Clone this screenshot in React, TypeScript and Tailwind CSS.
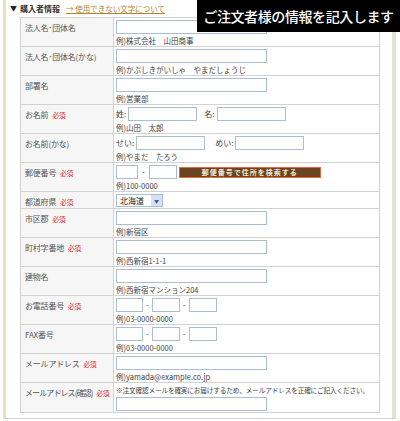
import React from 'react';

const font = { fontFamily: '"Noto Sans CJK JP", "Noto Sans", sans-serif' };

function Req() {
    return <span className="ml-[4px] text-[6.5px] tracking-normal text-[#e02020]">必須</span>;
}

function Box({ w }: { w: string }) {
    return <div className={`h-[14px] border border-[#a9bdd3] bg-white ${w}`} />;
}

function Ex({ children }: { children: React.ReactNode }) {
    return <div className="mt-[2px] whitespace-nowrap text-[7.5px] leading-[10px] text-[#444]">{children}</div>;
}

interface Row {
    label: string;
    req?: boolean;
    h?: string;
    tight?: boolean;
    body: React.ReactNode;
}

const rows: Row[] = [
    { label: '法人名･団体名', body: <><Box w="w-[151px]" /><Ex>例)株式会社　山田商事</Ex></> },
    { label: '法人名･団体名(かな)', body: <><Box w="w-[151px]" /><Ex>例)かぶしきがいしゃ　やまだしょうじ</Ex></> },
    { label: '部署名', body: <><Box w="w-[151px]" /><Ex>例)営業部</Ex></> },
    {
        label: 'お名前', req: true, body: (
            <>
                <div className="flex items-center text-[8px] text-[#444]">
                    <span>姓:</span>
                    <div className="ml-[2px]"><Box w="w-[69px]" /></div>
                    <span className="ml-[7px]">名:</span>
                    <div className="ml-[3px]"><Box w="w-[69px]" /></div>
                </div>
                <Ex>例)山田　太郎</Ex>
            </>
        ),
    },
    {
        label: 'お名前(かな)', body: (
            <>
                <div className="flex items-center text-[8px] text-[#444]">
                    <span>せい:</span>
                    <div className="ml-[2px]"><Box w="w-[69px]" /></div>
                    <span className="ml-[10px]">めい:</span>
                    <div className="ml-[2px]"><Box w="w-[69px]" /></div>
                </div>
                <Ex>例)やまだ　たろう</Ex>
            </>
        ),
    },
    {
        label: '郵便番号', req: true, body: (
            <>
                <div className="flex items-center text-[8px] text-[#444]">
                    <Box w="w-[22px]" />
                    <span className="mx-[4px]">-</span>
                    <Box w="w-[28px]" />
                    <button className="ml-[2px] h-[11px] w-[142px] border border-[#e06a3a] bg-[#6b4421] text-[7px] font-bold leading-[9px] tracking-[1px] text-[#f4ead8]">
                        郵便番号で住所を検索する
                    </button>
                </div>
                <Ex>例)100-0000</Ex>
            </>
        ),
    },
    {
        label: '都道府県', req: true, h: 'h-[17px]', body: (
            <div className="flex h-[13px] w-[47px] items-center justify-between border border-[#a9bdd3] bg-white pl-[3px] text-[8px] text-[#222]">
                <span>北海道</span>
                <span className="flex h-full w-[11px] items-center justify-center bg-[#d6e2f3] text-[5px] text-[#3a5ea8]">▼</span>
            </div>
        ),
    },
    { label: '市区郡', req: true, body: <><Box w="w-[151px]" /><Ex>例)新宿区</Ex></> },
    { label: '町村字番地', req: true, body: <><Box w="w-[151px]" /><Ex>例)西新宿1-1-1</Ex></> },
    { label: '建物名', body: <><Box w="w-[151px]" /><Ex>例)西新宿マンション204</Ex></> },
    {
        label: 'お電話番号', req: true, body: (
            <>
                <div className="flex items-center text-[8px] text-[#444]">
                    <Box w="w-[27px]" />
                    <span className="mx-[3px]">-</span>
                    <Box w="w-[28px]" />
                    <span className="mx-[3px]">-</span>
                    <Box w="w-[28px]" />
                </div>
                <Ex>例)03-0000-0000</Ex>
            </>
        ),
    },
    {
        label: 'FAX番号', body: (
            <>
                <div className="flex items-center text-[8px] text-[#444]">
                    <Box w="w-[27px]" />
                    <span className="mx-[3px]">-</span>
                    <Box w="w-[28px]" />
                    <span className="mx-[3px]">-</span>
                    <Box w="w-[28px]" />
                </div>
                <Ex>例)03-0000-0000</Ex>
            </>
        ),
    },
    { label: 'メールアドレス', req: true, body: <><Box w="w-[151px]" /><Ex>例)yamada@example.co.jp</Ex></> },
    {
        label: 'メールアドレス(確認)', req: true, tight: true, body: (
            <>
                <div className="mb-[2px] whitespace-nowrap text-[6.7px] leading-[10px] tracking-[-0.2px] text-[#444]">
                    ※注文確認メールを確実にお届けするため、メールアドレスを正確にご記入ください。
                </div>
                <Box w="w-[151px]" />
            </>
        ),
    },
];

export default function App() {
    return (
        <div className="relative h-[421px] w-[400px] overflow-hidden bg-white" style={font}>
            <div className="ml-[3px] h-[419px] w-[393px] border-r-[3px] border-l-[3px] border-b border-[#e7e2c6] border-b-[#cfcfcf] bg-white">
                <div className="h-full border-r border-[#e3e3e3] pl-[4px]">
                    {/* header */}
                    <div className="flex h-[17px] items-center text-[8px]">
                        <span className="text-[7px] text-[#222]">▼</span>
                        <span className="ml-[3px] font-bold text-[#333]">購入者情報</span>
                        <span className="ml-[6px] text-[7.5px] text-[#b5842a] underline">→ 使用できない文字について</span>
                    </div>

                    {/* form table */}
                    <div className="ml-[10px] w-[360px] border border-[#d2d2d2]">
                        {rows.map((row) => (
                            <div key={row.label} className={`grid grid-cols-[93px_1fr] border-b border-[#d2d2d2] last:border-b-0 ${row.h ?? 'h-[29px]'}`}>
                                <div className={`overflow-hidden whitespace-nowrap border-r border-[#d2d2d2] bg-[#f6f6f6] pl-[4px] pt-[4px] text-[8px] leading-[12px] text-[#555] ${row.tight ? 'tracking-[-0.9px]' : 'tracking-[-0.2px]'}`}>
                                    {row.label}
                                    {row.req && <Req />}
                                </div>
                                <div className="pl-[2px] pt-[2px]">{row.body}</div>
                            </div>
                        ))}
                    </div>
                </div>
            </div>

            {/* banner */}
            <div className="absolute right-0 top-0 flex h-[32px] w-[203px] items-center justify-center whitespace-nowrap bg-black text-[14px] font-medium tracking-[-0.4px] text-white">
                ご注文者様の情報を記入します
            </div>
        </div>
    );
}
